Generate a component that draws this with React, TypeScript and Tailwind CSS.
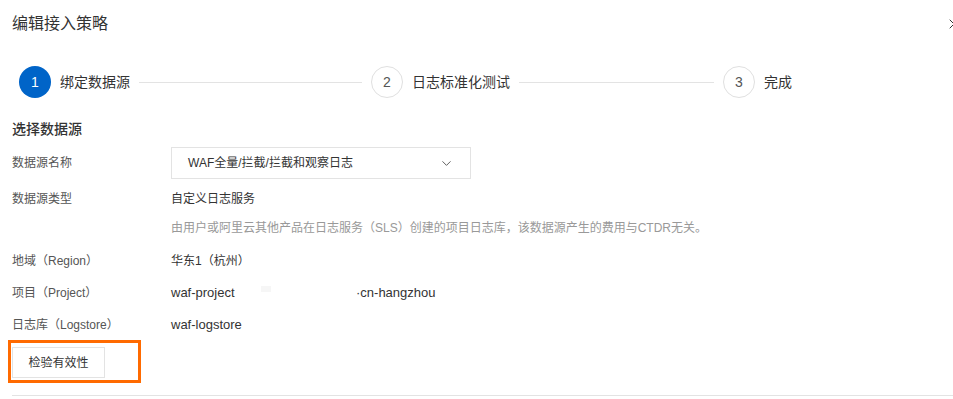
import { ChevronDown, ChevronRight } from 'lucide-react';

const font = '"Liberation Sans", "Noto Sans CJK SC", sans-serif';

type Step = { n: number; label: string; active?: boolean; last?: boolean };

const steps: Step[] = [
  { n: 1, label: '绑定数据源', active: true },
  { n: 2, label: '日志标准化测试' },
  { n: 3, label: '完成', last: true },
];

function StepItem({ step }: { step: Step }) {
  return (
    <div className={step.last ? 'flex items-center' : 'flex items-center w-[352px]'}>
      <div
        className={
          step.active
            ? 'w-8 h-8 rounded-full bg-[#0064c8] text-white flex items-center justify-center text-sm flex-shrink-0'
            : 'w-8 h-8 rounded-full border border-[#e0e0e0] bg-white text-[#555] flex items-center justify-center text-sm flex-shrink-0'
        }
      >
        {step.n}
      </div>
      <span className="ml-[9px] text-sm text-[#333] leading-5 whitespace-nowrap">{step.label}</span>
      {!step.last && <div className="flex-1 h-px bg-[#e3e3e3] mx-[9px]" />}
    </div>
  );
}

function Row({ label, children }: { label: string; children: React.ReactNode }) {
  return (
    <div className="flex items-center h-5 text-xs leading-5">
      <span className="w-[159px] text-[#555] flex-shrink-0">{label}</span>
      <div className="text-[#333]">{children}</div>
    </div>
  );
}

export default function App() {
  return (
    <div className="w-[953px] h-[399px] bg-white overflow-hidden pl-3" style={{ fontFamily: font }}>
      {/* header */}
      <div className="flex items-center justify-between h-12">
        <h1 className="text-base leading-6 text-[#333]">编辑接入策略</h1>
        <ChevronRight size={16} strokeWidth={1.5} className="text-[#333] -mr-[7px]" />
      </div>

      {/* steps */}
      <div className="flex items-center pt-[18px] pl-[7px]">
        {steps.map((s) => (
          <StepItem key={s.n} step={s} />
        ))}
      </div>

      <div className="mt-[21px] text-sm leading-5 font-medium text-[#333]">选择数据源</div>

      <div className="mt-2 flex items-center h-8 text-xs">
        <span className="w-[159px] text-[#555] flex-shrink-0">数据源名称</span>
        <div className="w-[300px] h-8 border border-[#e3e3e3] flex items-center justify-between pl-4 pr-[12px] text-xs text-[#333]">
          <span>WAF全量/拦截/拦截和观察日志</span>
          <ChevronDown size={15} strokeWidth={1.5} className="text-[#555] mr-1" />
        </div>
      </div>

      <div className="mt-[10px]">
        <Row label="数据源类型">自定义日志服务</Row>
      </div>
      <div className="mt-[9px] pl-[159px] text-xs leading-5 text-[#999]">
        由用户或阿里云其他产品在日志服务（SLS）创建的项目日志库，该数据源产生的费用与CTDR无关。
      </div>

      <div className="mt-[13px]">
        <Row label="地域（Region）">华东1（杭州）</Row>
      </div>
      <div className="mt-3">
        <Row label="项目（Project）">
          <div className="flex items-center text-[13px]">
            <span className="w-[90px]">waf-project</span>
            <span className="w-[10px] h-[6px] bg-[#f6f6f6] -mt-2" />
            <span className="ml-[85px]">·cn-hangzhou</span>
          </div>
        </Row>
      </div>
      <div className="mt-3">
        <Row label="日志库（Logstore）">
          <span className="text-[13px]">waf-logstore</span>
        </Row>
      </div>

      <div className="mt-[5px] -ml-1 w-[133px] border-[3px] border-[#ff6a00] pl-px pt-1 pb-0.5">
        <button className="w-[93px] h-[31px] border border-[#e3e3e3] bg-white text-xs text-[#333]">
          检验有效性
        </button>
      </div>

      <div className="mt-3 border-t border-[#e3e3e3]" />
    </div>
  );
}
